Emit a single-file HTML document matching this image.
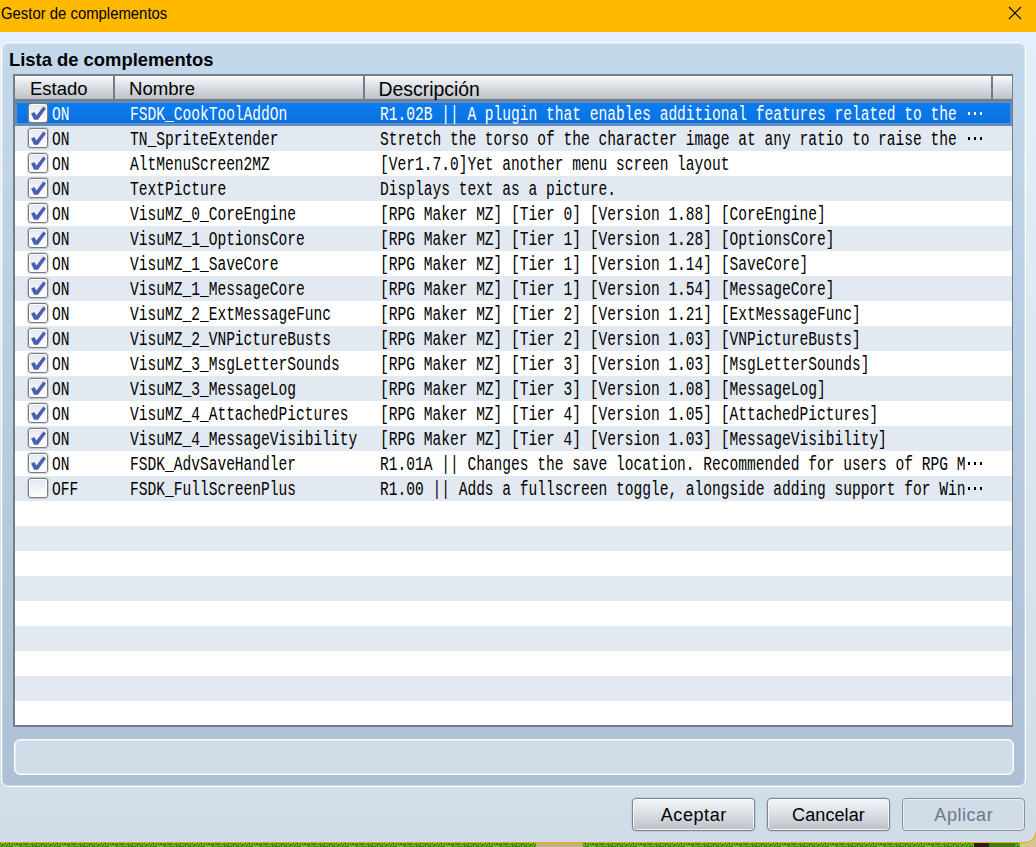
<!DOCTYPE html>
<html><head><meta charset="utf-8"><title>Gestor de complementos</title>
<style>
html,body{margin:0;padding:0}
body{width:1036px;height:847px;overflow:hidden;position:relative;background:#d0dce8;font-family:"Liberation Sans",sans-serif}
div{box-sizing:border-box}
#titlebar{position:absolute;left:0;top:0;width:1036px;height:32px;background:#ffb900}
#titlebar .ttl{position:absolute;left:1px;top:5px;font-size:16px;line-height:18px;transform:scaleX(0.93);transform-origin:0 0;color:#000;white-space:nowrap}
#close{position:absolute;left:1008px;top:6px}
#winbody{position:absolute;left:0;top:32px;width:1036px;height:810px;background:linear-gradient(#e3effc,#d0dce8);border-bottom-right-radius:10px}
#bottomline{position:absolute;left:0;top:842px;width:1027px;height:1px;background:#f5a800}
#grass{position:absolute;left:0;top:843px;width:1036px;height:4px;background:linear-gradient(90deg,transparent 536px,#b9ab78 536px,#c6b98a 560px,#a8985e 583px,transparent 583px,transparent 974px,#2a1a12 974px,#3a2a18 989px,#2f6a14 989px,#3f7a18 1014px,#c8b880 1015px),repeating-linear-gradient(90deg,#4e9e1c 0,#6ab828 3px,#3a8614 6px,#5fae22 9px,#2f7810 12px,#58a61e 15px,#72bc2c 18px,#3e8c16 22px,#4e9e1c 24px)}
#corner{position:absolute;left:1020px;top:826px;width:16px;height:21px;background:#d2c88c}
#cornerWrap{position:absolute;left:996px;top:832px;width:40px;height:11px;overflow:hidden}
#cornerArc{position:absolute;left:0;top:-20px;width:40px;height:31px;border-right:1px solid #f7ab00;border-bottom:1px solid #f7ab00;border-bottom-right-radius:10px;box-shadow:0 0 0 40px #d2c88c}
#panel{position:absolute;left:1px;top:42px;width:1025px;height:745px;border:1px solid #fff;border-radius:7px;box-shadow:inset 0 0 0 1px rgba(255,255,255,0.3);background:linear-gradient(#c4d8ec,#adc0d6)}
#panelTitle{position:absolute;left:9px;top:50px;font-weight:bold;font-size:18.4px;line-height:20px;white-space:nowrap;color:#000}
#table{position:absolute;left:13px;top:74px;width:1000px;height:653px;border-style:solid;border-color:#767c85;border-width:2px 1px 2px 2px;background:#fff;overflow:hidden}
#hdr{position:absolute;left:0;top:0;width:997px;height:25px;background:#767c85}
.hsec{position:absolute;top:0;height:23px;background:linear-gradient(#f4f7fb,#bcc1c8);border-top:1px solid #fbfdff}
.hsep{position:absolute;top:0;width:2px;height:25px;background:#767c85}
.htxt{position:absolute;top:3px;font-size:19px;line-height:20px;white-space:nowrap;color:#000}
.row{position:absolute;left:0;width:997px;height:25px;background:#fff}
.row.alt{background:#e3e9f1}
.row.sel{background:linear-gradient(#0c7ef2,#0a6fdd);color:#fff}
.row.sel::before{content:"";position:absolute;left:0;top:0;right:0;bottom:0;border:2px solid #5e8ec2;border-bottom-width:3px}
.cb{position:absolute;left:13px;top:2px;width:20px;height:20px;border:1px solid #787d84;border-radius:3px;box-shadow:0 0 0 1px rgba(120,125,132,0.3),inset 0 0 0 1px #fff;background:linear-gradient(#e2e7ef,#fff)}
.ck{position:absolute;left:-2px;top:-2px}
.m{position:absolute;top:2px;font-family:"Liberation Mono",monospace;font-size:19.4px;line-height:25px;white-space:pre;transform:scaleX(0.751);transform-origin:0 0;color:#000}
.row.sel .m{color:#fff}
.st{left:37px}
.nm{left:115px}
.ds{left:365px}
.ell{position:absolute;left:953px;top:11px;width:18px;height:3px}
.ell i{position:absolute;top:0;width:2px;height:3px;background:#000}
.row.sel .ell i{background:#fff}
.ell i:nth-child(1){left:0}.ell i:nth-child(2){left:6px}.ell i:nth-child(3){left:12px}
#status{position:absolute;left:14px;top:739px;width:1000px;height:36px;border:1px solid #fff;border-radius:6px;box-shadow:inset 0 0 0 1px rgba(255,255,255,0.45);background:#d0dce8}
.btn{position:absolute;top:798px;width:123px;height:33px;border:1px solid #80868e;border-radius:4px;box-shadow:inset 0 0 0 1px rgba(255,255,255,0.75),0 0 0 0.5px rgba(128,134,142,0.4);background:linear-gradient(#f1f4f8,#e2e6ec 35%,#bcc1c8);font-size:18px;line-height:32px;text-align:center;color:#000;white-space:nowrap}
.btn.c1{letter-spacing:0.6px;text-indent:0.6px}
.btn.c2{letter-spacing:0.1px}
.btn.c3{letter-spacing:0.55px;text-indent:0.55px}
.btn.dis{background:#d1dce8;color:#6b7888;border-color:#8d949c;box-shadow:inset 0 0 0 1px rgba(255,255,255,0.5)}

</style></head><body>
<div id="titlebar"><div class="ttl">Gestor de complementos</div>
<svg id="close" width="14" height="14" viewBox="0 0 14 14"><path d="M1 1L13 13M13 1L1 13" stroke="#000" stroke-width="1.1" fill="none"/></svg></div>
<div id="bottomline"></div><svg id="grassSvg" width="1036" height="4" style="position:absolute;left:0;top:843px;display:block"><defs><pattern id="gp" width="48" height="4" patternUnits="userSpaceOnUse"><rect x="0" y="0" width="1" height="1" fill="#2e7410"/><rect x="1" y="0" width="1" height="1" fill="#6cbc2a"/><rect x="2" y="0" width="1" height="1" fill="#7cc434"/><rect x="3" y="0" width="1" height="1" fill="#60b024"/><rect x="4" y="0" width="1" height="1" fill="#58a81e"/><rect x="5" y="0" width="1" height="1" fill="#3e8c14"/><rect x="6" y="0" width="1" height="1" fill="#60b024"/><rect x="7" y="0" width="1" height="1" fill="#4c9c1a"/><rect x="8" y="0" width="1" height="1" fill="#2e7410"/><rect x="9" y="0" width="1" height="1" fill="#2e7410"/><rect x="10" y="0" width="1" height="1" fill="#60b024"/><rect x="11" y="0" width="1" height="1" fill="#60b024"/><rect x="12" y="0" width="1" height="1" fill="#367e12"/><rect x="13" y="0" width="1" height="1" fill="#6cbc2a"/><rect x="14" y="0" width="1" height="1" fill="#2e7410"/><rect x="15" y="0" width="1" height="1" fill="#6cbc2a"/><rect x="16" y="0" width="1" height="1" fill="#367e12"/><rect x="17" y="0" width="1" height="1" fill="#3e8c14"/><rect x="18" y="0" width="1" height="1" fill="#58a81e"/><rect x="19" y="0" width="1" height="1" fill="#6cbc2a"/><rect x="20" y="0" width="1" height="1" fill="#3e8c14"/><rect x="21" y="0" width="1" height="1" fill="#4c9c1a"/><rect x="22" y="0" width="1" height="1" fill="#3e8c14"/><rect x="23" y="0" width="1" height="1" fill="#4c9c1a"/><rect x="24" y="0" width="1" height="1" fill="#60b024"/><rect x="25" y="0" width="1" height="1" fill="#367e12"/><rect x="26" y="0" width="1" height="1" fill="#367e12"/><rect x="27" y="0" width="1" height="1" fill="#367e12"/><rect x="28" y="0" width="1" height="1" fill="#60b024"/><rect x="29" y="0" width="1" height="1" fill="#6cbc2a"/><rect x="30" y="0" width="1" height="1" fill="#7cc434"/><rect x="31" y="0" width="1" height="1" fill="#58a81e"/><rect x="32" y="0" width="1" height="1" fill="#3e8c14"/><rect x="33" y="0" width="1" height="1" fill="#6cbc2a"/><rect x="34" y="0" width="1" height="1" fill="#60b024"/><rect x="35" y="0" width="1" height="1" fill="#2e7410"/><rect x="36" y="0" width="1" height="1" fill="#4c9c1a"/><rect x="37" y="0" width="1" height="1" fill="#367e12"/><rect x="38" y="0" width="1" height="1" fill="#4c9c1a"/><rect x="39" y="0" width="1" height="1" fill="#367e12"/><rect x="40" y="0" width="1" height="1" fill="#367e12"/><rect x="41" y="0" width="1" height="1" fill="#7cc434"/><rect x="42" y="0" width="1" height="1" fill="#367e12"/><rect x="43" y="0" width="1" height="1" fill="#2e7410"/><rect x="44" y="0" width="1" height="1" fill="#7cc434"/><rect x="45" y="0" width="1" height="1" fill="#3e8c14"/><rect x="46" y="0" width="1" height="1" fill="#4c9c1a"/><rect x="47" y="0" width="1" height="1" fill="#6cbc2a"/><rect x="0" y="1" width="1" height="1" fill="#7cc434"/><rect x="1" y="1" width="1" height="1" fill="#58a81e"/><rect x="2" y="1" width="1" height="1" fill="#2e7410"/><rect x="3" y="1" width="1" height="1" fill="#4c9c1a"/><rect x="4" y="1" width="1" height="1" fill="#4c9c1a"/><rect x="5" y="1" width="1" height="1" fill="#58a81e"/><rect x="6" y="1" width="1" height="1" fill="#58a81e"/><rect x="7" y="1" width="1" height="1" fill="#60b024"/><rect x="8" y="1" width="1" height="1" fill="#60b024"/><rect x="9" y="1" width="1" height="1" fill="#58a81e"/><rect x="10" y="1" width="1" height="1" fill="#7cc434"/><rect x="11" y="1" width="1" height="1" fill="#58a81e"/><rect x="12" y="1" width="1" height="1" fill="#367e12"/><rect x="13" y="1" width="1" height="1" fill="#6cbc2a"/><rect x="14" y="1" width="1" height="1" fill="#3e8c14"/><rect x="15" y="1" width="1" height="1" fill="#4c9c1a"/><rect x="16" y="1" width="1" height="1" fill="#367e12"/><rect x="17" y="1" width="1" height="1" fill="#367e12"/><rect x="18" y="1" width="1" height="1" fill="#58a81e"/><rect x="19" y="1" width="1" height="1" fill="#3e8c14"/><rect x="20" y="1" width="1" height="1" fill="#3e8c14"/><rect x="21" y="1" width="1" height="1" fill="#367e12"/><rect x="22" y="1" width="1" height="1" fill="#7cc434"/><rect x="23" y="1" width="1" height="1" fill="#4c9c1a"/><rect x="24" y="1" width="1" height="1" fill="#2e7410"/><rect x="25" y="1" width="1" height="1" fill="#3e8c14"/><rect x="26" y="1" width="1" height="1" fill="#4c9c1a"/><rect x="27" y="1" width="1" height="1" fill="#3e8c14"/><rect x="28" y="1" width="1" height="1" fill="#58a81e"/><rect x="29" y="1" width="1" height="1" fill="#58a81e"/><rect x="30" y="1" width="1" height="1" fill="#3e8c14"/><rect x="31" y="1" width="1" height="1" fill="#2e7410"/><rect x="32" y="1" width="1" height="1" fill="#367e12"/><rect x="33" y="1" width="1" height="1" fill="#4c9c1a"/><rect x="34" y="1" width="1" height="1" fill="#4c9c1a"/><rect x="35" y="1" width="1" height="1" fill="#6cbc2a"/><rect x="36" y="1" width="1" height="1" fill="#3e8c14"/><rect x="37" y="1" width="1" height="1" fill="#7cc434"/><rect x="38" y="1" width="1" height="1" fill="#7cc434"/><rect x="39" y="1" width="1" height="1" fill="#7cc434"/><rect x="40" y="1" width="1" height="1" fill="#6cbc2a"/><rect x="41" y="1" width="1" height="1" fill="#367e12"/><rect x="42" y="1" width="1" height="1" fill="#367e12"/><rect x="43" y="1" width="1" height="1" fill="#60b024"/><rect x="44" y="1" width="1" height="1" fill="#367e12"/><rect x="45" y="1" width="1" height="1" fill="#58a81e"/><rect x="46" y="1" width="1" height="1" fill="#4c9c1a"/><rect x="47" y="1" width="1" height="1" fill="#367e12"/><rect x="0" y="2" width="1" height="1" fill="#2e7410"/><rect x="1" y="2" width="1" height="1" fill="#4c9c1a"/><rect x="2" y="2" width="1" height="1" fill="#367e12"/><rect x="3" y="2" width="1" height="1" fill="#4c9c1a"/><rect x="4" y="2" width="1" height="1" fill="#4c9c1a"/><rect x="5" y="2" width="1" height="1" fill="#7cc434"/><rect x="6" y="2" width="1" height="1" fill="#3e8c14"/><rect x="7" y="2" width="1" height="1" fill="#367e12"/><rect x="8" y="2" width="1" height="1" fill="#7cc434"/><rect x="9" y="2" width="1" height="1" fill="#3e8c14"/><rect x="10" y="2" width="1" height="1" fill="#367e12"/><rect x="11" y="2" width="1" height="1" fill="#6cbc2a"/><rect x="12" y="2" width="1" height="1" fill="#3e8c14"/><rect x="13" y="2" width="1" height="1" fill="#7cc434"/><rect x="14" y="2" width="1" height="1" fill="#60b024"/><rect x="15" y="2" width="1" height="1" fill="#7cc434"/><rect x="16" y="2" width="1" height="1" fill="#7cc434"/><rect x="17" y="2" width="1" height="1" fill="#4c9c1a"/><rect x="18" y="2" width="1" height="1" fill="#60b024"/><rect x="19" y="2" width="1" height="1" fill="#3e8c14"/><rect x="20" y="2" width="1" height="1" fill="#3e8c14"/><rect x="21" y="2" width="1" height="1" fill="#3e8c14"/><rect x="22" y="2" width="1" height="1" fill="#7cc434"/><rect x="23" y="2" width="1" height="1" fill="#4c9c1a"/><rect x="24" y="2" width="1" height="1" fill="#60b024"/><rect x="25" y="2" width="1" height="1" fill="#4c9c1a"/><rect x="26" y="2" width="1" height="1" fill="#7cc434"/><rect x="27" y="2" width="1" height="1" fill="#6cbc2a"/><rect x="28" y="2" width="1" height="1" fill="#7cc434"/><rect x="29" y="2" width="1" height="1" fill="#6cbc2a"/><rect x="30" y="2" width="1" height="1" fill="#7cc434"/><rect x="31" y="2" width="1" height="1" fill="#7cc434"/><rect x="32" y="2" width="1" height="1" fill="#4c9c1a"/><rect x="33" y="2" width="1" height="1" fill="#4c9c1a"/><rect x="34" y="2" width="1" height="1" fill="#367e12"/><rect x="35" y="2" width="1" height="1" fill="#58a81e"/><rect x="36" y="2" width="1" height="1" fill="#3e8c14"/><rect x="37" y="2" width="1" height="1" fill="#6cbc2a"/><rect x="38" y="2" width="1" height="1" fill="#4c9c1a"/><rect x="39" y="2" width="1" height="1" fill="#2e7410"/><rect x="40" y="2" width="1" height="1" fill="#4c9c1a"/><rect x="41" y="2" width="1" height="1" fill="#2e7410"/><rect x="42" y="2" width="1" height="1" fill="#7cc434"/><rect x="43" y="2" width="1" height="1" fill="#6cbc2a"/><rect x="44" y="2" width="1" height="1" fill="#367e12"/><rect x="45" y="2" width="1" height="1" fill="#58a81e"/><rect x="46" y="2" width="1" height="1" fill="#58a81e"/><rect x="47" y="2" width="1" height="1" fill="#7cc434"/><rect x="0" y="3" width="1" height="1" fill="#7cc434"/><rect x="1" y="3" width="1" height="1" fill="#2e7410"/><rect x="2" y="3" width="1" height="1" fill="#60b024"/><rect x="3" y="3" width="1" height="1" fill="#6cbc2a"/><rect x="4" y="3" width="1" height="1" fill="#58a81e"/><rect x="5" y="3" width="1" height="1" fill="#7cc434"/><rect x="6" y="3" width="1" height="1" fill="#2e7410"/><rect x="7" y="3" width="1" height="1" fill="#60b024"/><rect x="8" y="3" width="1" height="1" fill="#4c9c1a"/><rect x="9" y="3" width="1" height="1" fill="#2e7410"/><rect x="10" y="3" width="1" height="1" fill="#58a81e"/><rect x="11" y="3" width="1" height="1" fill="#3e8c14"/><rect x="12" y="3" width="1" height="1" fill="#2e7410"/><rect x="13" y="3" width="1" height="1" fill="#7cc434"/><rect x="14" y="3" width="1" height="1" fill="#6cbc2a"/><rect x="15" y="3" width="1" height="1" fill="#4c9c1a"/><rect x="16" y="3" width="1" height="1" fill="#7cc434"/><rect x="17" y="3" width="1" height="1" fill="#58a81e"/><rect x="18" y="3" width="1" height="1" fill="#7cc434"/><rect x="19" y="3" width="1" height="1" fill="#6cbc2a"/><rect x="20" y="3" width="1" height="1" fill="#367e12"/><rect x="21" y="3" width="1" height="1" fill="#4c9c1a"/><rect x="22" y="3" width="1" height="1" fill="#4c9c1a"/><rect x="23" y="3" width="1" height="1" fill="#60b024"/><rect x="24" y="3" width="1" height="1" fill="#7cc434"/><rect x="25" y="3" width="1" height="1" fill="#367e12"/><rect x="26" y="3" width="1" height="1" fill="#4c9c1a"/><rect x="27" y="3" width="1" height="1" fill="#367e12"/><rect x="28" y="3" width="1" height="1" fill="#367e12"/><rect x="29" y="3" width="1" height="1" fill="#3e8c14"/><rect x="30" y="3" width="1" height="1" fill="#367e12"/><rect x="31" y="3" width="1" height="1" fill="#6cbc2a"/><rect x="32" y="3" width="1" height="1" fill="#2e7410"/><rect x="33" y="3" width="1" height="1" fill="#3e8c14"/><rect x="34" y="3" width="1" height="1" fill="#60b024"/><rect x="35" y="3" width="1" height="1" fill="#367e12"/><rect x="36" y="3" width="1" height="1" fill="#2e7410"/><rect x="37" y="3" width="1" height="1" fill="#3e8c14"/><rect x="38" y="3" width="1" height="1" fill="#60b024"/><rect x="39" y="3" width="1" height="1" fill="#4c9c1a"/><rect x="40" y="3" width="1" height="1" fill="#7cc434"/><rect x="41" y="3" width="1" height="1" fill="#2e7410"/><rect x="42" y="3" width="1" height="1" fill="#58a81e"/><rect x="43" y="3" width="1" height="1" fill="#4c9c1a"/><rect x="44" y="3" width="1" height="1" fill="#58a81e"/><rect x="45" y="3" width="1" height="1" fill="#2e7410"/><rect x="46" y="3" width="1" height="1" fill="#3e8c14"/><rect x="47" y="3" width="1" height="1" fill="#3e8c14"/></pattern></defs><rect width="1036" height="4" fill="url(#gp)"/><rect x="536" width="47" height="4" fill="#bfb282"/><rect x="974" width="15" height="4" fill="#2c1c12"/><rect x="989" width="26" height="4" fill="#3a7a18"/></svg><div id="corner"></div><div id="winbody"></div><div id="cornerWrap"><div id="cornerArc"></div></div>
<div id="panel"></div>
<div id="panelTitle">Lista de complementos</div>
<div id="table">
 <div id="hdr">
  <div class="hsec" style="left:0;width:98px"></div>
  <div class="hsep" style="left:98px"></div>
  <div class="hsec" style="left:100px;width:248px"></div>
  <div class="hsep" style="left:348px"></div>
  <div class="hsec" style="left:350px;width:626px"></div>
  <div class="hsep" style="left:976px"></div>
  <div class="hsec" style="left:978px;width:19px"></div>
 </div>
 <div class="htxt" style="left:15px;font-size:18.5px">Estado</div>
 <div class="htxt" style="left:114px;font-size:18.6px">Nombre</div>
 <div class="htxt" style="left:363.5px;font-size:19.4px">Descripción</div>
 <div class="row sel" style="top:25px"><div class="cb"><svg class="ck" width="22" height="21" viewBox="0 0 22 21"><path d="M4.1 11.6L7.4 10.0L9.4 13.5L16.4 4.6L18.9 6.6L11.0 17.8L7.0 17.8Z" fill="#4B5FB0"/></svg></div><div class="m st">ON</div><div class="m nm">FSDK_CookToolAddOn</div><div class="m ds">R1.02B || A plugin that enables additional features related to the </div><div class="ell"><i></i><i></i><i></i></div></div>
 <div class="row alt" style="top:50px"><div class="cb"><svg class="ck" width="22" height="21" viewBox="0 0 22 21"><path d="M4.1 11.6L7.4 10.0L9.4 13.5L16.4 4.6L18.9 6.6L11.0 17.8L7.0 17.8Z" fill="#4B5FB0"/></svg></div><div class="m st">ON</div><div class="m nm">TN_SpriteExtender</div><div class="m ds">Stretch the torso of the character image at any ratio to raise the </div><div class="ell"><i></i><i></i><i></i></div></div>
 <div class="row" style="top:75px"><div class="cb"><svg class="ck" width="22" height="21" viewBox="0 0 22 21"><path d="M4.1 11.6L7.4 10.0L9.4 13.5L16.4 4.6L18.9 6.6L11.0 17.8L7.0 17.8Z" fill="#4B5FB0"/></svg></div><div class="m st">ON</div><div class="m nm">AltMenuScreen2MZ</div><div class="m ds">[Ver1.7.0]Yet another menu screen layout</div></div>
 <div class="row alt" style="top:100px"><div class="cb"><svg class="ck" width="22" height="21" viewBox="0 0 22 21"><path d="M4.1 11.6L7.4 10.0L9.4 13.5L16.4 4.6L18.9 6.6L11.0 17.8L7.0 17.8Z" fill="#4B5FB0"/></svg></div><div class="m st">ON</div><div class="m nm">TextPicture</div><div class="m ds">Displays text as a picture.</div></div>
 <div class="row" style="top:125px"><div class="cb"><svg class="ck" width="22" height="21" viewBox="0 0 22 21"><path d="M4.1 11.6L7.4 10.0L9.4 13.5L16.4 4.6L18.9 6.6L11.0 17.8L7.0 17.8Z" fill="#4B5FB0"/></svg></div><div class="m st">ON</div><div class="m nm">VisuMZ_0_CoreEngine</div><div class="m ds">[RPG Maker MZ] [Tier 0] [Version 1.88] [CoreEngine]</div></div>
 <div class="row alt" style="top:150px"><div class="cb"><svg class="ck" width="22" height="21" viewBox="0 0 22 21"><path d="M4.1 11.6L7.4 10.0L9.4 13.5L16.4 4.6L18.9 6.6L11.0 17.8L7.0 17.8Z" fill="#4B5FB0"/></svg></div><div class="m st">ON</div><div class="m nm">VisuMZ_1_OptionsCore</div><div class="m ds">[RPG Maker MZ] [Tier 1] [Version 1.28] [OptionsCore]</div></div>
 <div class="row" style="top:175px"><div class="cb"><svg class="ck" width="22" height="21" viewBox="0 0 22 21"><path d="M4.1 11.6L7.4 10.0L9.4 13.5L16.4 4.6L18.9 6.6L11.0 17.8L7.0 17.8Z" fill="#4B5FB0"/></svg></div><div class="m st">ON</div><div class="m nm">VisuMZ_1_SaveCore</div><div class="m ds">[RPG Maker MZ] [Tier 1] [Version 1.14] [SaveCore]</div></div>
 <div class="row alt" style="top:200px"><div class="cb"><svg class="ck" width="22" height="21" viewBox="0 0 22 21"><path d="M4.1 11.6L7.4 10.0L9.4 13.5L16.4 4.6L18.9 6.6L11.0 17.8L7.0 17.8Z" fill="#4B5FB0"/></svg></div><div class="m st">ON</div><div class="m nm">VisuMZ_1_MessageCore</div><div class="m ds">[RPG Maker MZ] [Tier 1] [Version 1.54] [MessageCore]</div></div>
 <div class="row" style="top:225px"><div class="cb"><svg class="ck" width="22" height="21" viewBox="0 0 22 21"><path d="M4.1 11.6L7.4 10.0L9.4 13.5L16.4 4.6L18.9 6.6L11.0 17.8L7.0 17.8Z" fill="#4B5FB0"/></svg></div><div class="m st">ON</div><div class="m nm">VisuMZ_2_ExtMessageFunc</div><div class="m ds">[RPG Maker MZ] [Tier 2] [Version 1.21] [ExtMessageFunc]</div></div>
 <div class="row alt" style="top:250px"><div class="cb"><svg class="ck" width="22" height="21" viewBox="0 0 22 21"><path d="M4.1 11.6L7.4 10.0L9.4 13.5L16.4 4.6L18.9 6.6L11.0 17.8L7.0 17.8Z" fill="#4B5FB0"/></svg></div><div class="m st">ON</div><div class="m nm">VisuMZ_2_VNPictureBusts</div><div class="m ds">[RPG Maker MZ] [Tier 2] [Version 1.03] [VNPictureBusts]</div></div>
 <div class="row" style="top:275px"><div class="cb"><svg class="ck" width="22" height="21" viewBox="0 0 22 21"><path d="M4.1 11.6L7.4 10.0L9.4 13.5L16.4 4.6L18.9 6.6L11.0 17.8L7.0 17.8Z" fill="#4B5FB0"/></svg></div><div class="m st">ON</div><div class="m nm">VisuMZ_3_MsgLetterSounds</div><div class="m ds">[RPG Maker MZ] [Tier 3] [Version 1.03] [MsgLetterSounds]</div></div>
 <div class="row alt" style="top:300px"><div class="cb"><svg class="ck" width="22" height="21" viewBox="0 0 22 21"><path d="M4.1 11.6L7.4 10.0L9.4 13.5L16.4 4.6L18.9 6.6L11.0 17.8L7.0 17.8Z" fill="#4B5FB0"/></svg></div><div class="m st">ON</div><div class="m nm">VisuMZ_3_MessageLog</div><div class="m ds">[RPG Maker MZ] [Tier 3] [Version 1.08] [MessageLog]</div></div>
 <div class="row" style="top:325px"><div class="cb"><svg class="ck" width="22" height="21" viewBox="0 0 22 21"><path d="M4.1 11.6L7.4 10.0L9.4 13.5L16.4 4.6L18.9 6.6L11.0 17.8L7.0 17.8Z" fill="#4B5FB0"/></svg></div><div class="m st">ON</div><div class="m nm">VisuMZ_4_AttachedPictures</div><div class="m ds">[RPG Maker MZ] [Tier 4] [Version 1.05] [AttachedPictures]</div></div>
 <div class="row alt" style="top:350px"><div class="cb"><svg class="ck" width="22" height="21" viewBox="0 0 22 21"><path d="M4.1 11.6L7.4 10.0L9.4 13.5L16.4 4.6L18.9 6.6L11.0 17.8L7.0 17.8Z" fill="#4B5FB0"/></svg></div><div class="m st">ON</div><div class="m nm">VisuMZ_4_MessageVisibility</div><div class="m ds">[RPG Maker MZ] [Tier 4] [Version 1.03] [MessageVisibility]</div></div>
 <div class="row" style="top:375px"><div class="cb"><svg class="ck" width="22" height="21" viewBox="0 0 22 21"><path d="M4.1 11.6L7.4 10.0L9.4 13.5L16.4 4.6L18.9 6.6L11.0 17.8L7.0 17.8Z" fill="#4B5FB0"/></svg></div><div class="m st">ON</div><div class="m nm">FSDK_AdvSaveHandler</div><div class="m ds">R1.01A || Changes the save location. Recommended for users of RPG M</div><div class="ell"><i></i><i></i><i></i></div></div>
 <div class="row alt" style="top:400px"><div class="cb"></div><div class="m st">OFF</div><div class="m nm">FSDK_FullScreenPlus</div><div class="m ds">R1.00 || Adds a fullscreen toggle, alongside adding support for Win</div><div class="ell"><i></i><i></i><i></i></div></div>
 <div class="row" style="top:425px"></div>
 <div class="row alt" style="top:450px"></div>
 <div class="row" style="top:475px"></div>
 <div class="row alt" style="top:500px"></div>
 <div class="row" style="top:525px"></div>
 <div class="row alt" style="top:550px"></div>
 <div class="row" style="top:575px"></div>
 <div class="row alt" style="top:600px"></div>
 <div class="row" style="top:625px"></div>
</div>
<div id="status"></div>
<div class="btn c1" style="left:632px">Aceptar</div>
<div class="btn c2" style="left:767px">Cancelar</div>
<div class="btn dis c3" style="left:902px">Aplicar</div>
</body></html>
